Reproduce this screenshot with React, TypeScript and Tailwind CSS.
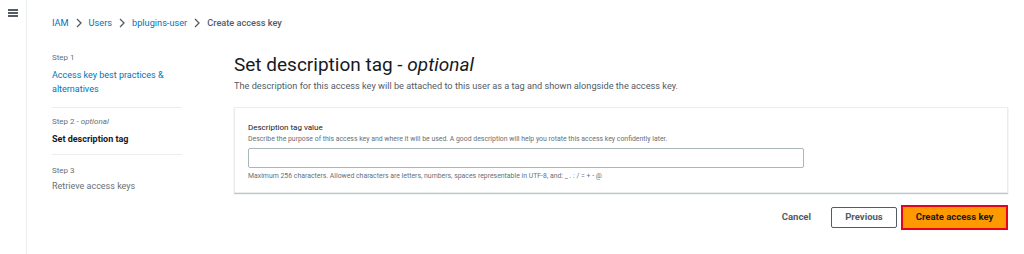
import React from "react";

const font = { fontFamily: 'Roboto, "Liberation Sans", Arial, sans-serif' };

function Chevron() {
  return (
    <svg width="8" height="10" viewBox="0 0 8 10" className="mx-[6px]">
      <path d="M2 1 L6 5 L2 9" fill="none" stroke="#545b64" strokeWidth="1.3" />
    </svg>
  );
}

export default function App() {
  return (
    <div
      className="w-[1024px] h-[254px] bg-white flex text-[#16191f] overflow-hidden"
      style={font}
    >
      <div className="w-[27px] shrink-0 border-r border-[#eaeded] pt-[9px] pl-[8px]">
        <div className="w-[10px] flex flex-col gap-[1.5px]">
          <span className="h-[1.5px] bg-[#545b64]" />
          <span className="h-[1.5px] bg-[#545b64]" />
          <span className="h-[1.5px] bg-[#545b64]" />
        </div>
      </div>

      <div className="flex-1 pl-[25px] pr-[16px] pt-[16px]">
        <nav className="flex items-center h-[14px] text-[9.2px]">
          <span className="text-[#0073bb]">IAM</span>
          <Chevron />
          <span className="text-[#0073bb]">Users</span>
          <Chevron />
          <span className="text-[#0073bb]">bplugins-user</span>
          <Chevron />
          <span className="text-[#545b64] font-medium">Create access key</span>
        </nav>

        <div className="flex mt-[22px]">
          <aside className="w-[130px] shrink-0">
            <div className="pb-[11px] border-b border-[#eaeded]">
              <p className="text-[8px] text-[#687078] leading-[12px]">Step 1</p>
              <p className="text-[9px] text-[#0073bb] leading-[14px] mt-[4px]">
                Access key best practices &amp; alternatives
              </p>
            </div>
            <div className="pt-[8px] pb-[8px] border-b border-[#eaeded]">
              <p className="text-[8px] text-[#687078] leading-[12px]">
                Step 2 - <i>optional</i>
              </p>
              <p className="text-[9px] font-bold leading-[14px] mt-[4px]">
                Set description tag
              </p>
            </div>
            <div className="pt-[10px]">
              <p className="text-[8px] text-[#687078] leading-[12px]">Step 3</p>
              <p className="text-[9px] text-[#687078] leading-[14px] mt-[2px]">
                Retrieve access keys
              </p>
            </div>
          </aside>

          <main className="flex-1 ml-[52px]">
            <h1 className="text-[19px] leading-[24px] text-[#16191f] mt-[1px]">
              Set description tag - <i>optional</i>
            </h1>
            <p className="text-[9.2px] text-[#545b64] mt-[3px] leading-[12px]">
              The description for this access key will be attached to this user as a tag and
              shown alongside the access key.
            </p>

            <section className="mt-[15px] border border-[#eaeded] shadow-[0_1px_1px_rgba(0,28,36,0.25)] px-[13px] pt-[13px] pb-[10px]">
              <p className="text-[8px] leading-[13px]">Description tag value</p>
              <p className="text-[6.9px] text-[#687078] leading-[11px]">
                Describe the purpose of this access key and where it will be used. A good
                description will help you rotate this access key confidently later.
              </p>
              <input
                type="text"
                className="block w-[556px] h-[20px] mt-[3px] border border-[#aab7b8] rounded-[2px] outline-none"
              />
              <p className="text-[6.9px] text-[#687078] leading-[11px] mt-[3px]">
                Maximum 256 characters. Allowed characters are letters, numbers, spaces
                representable in UTF-8, and: _ . : / = + - @
              </p>
            </section>

            <div className="flex items-center justify-end mt-[12px] text-[9.5px] font-bold">
              <button className="text-[#545b64] px-[12px] h-[21px]">Cancel</button>
              <button className="ml-[8px] w-[66px] h-[21px] border border-[#545b64] rounded-[2px] text-[#545b64] bg-white">
                Previous
              </button>
              <button className="ml-[4px] w-[107px] h-[25px] border-2 border-[#e8001c] bg-[#ff9900] text-[#16191f]">
                Create access key
              </button>
            </div>
          </main>
        </div>
      </div>
    </div>
  );
}
